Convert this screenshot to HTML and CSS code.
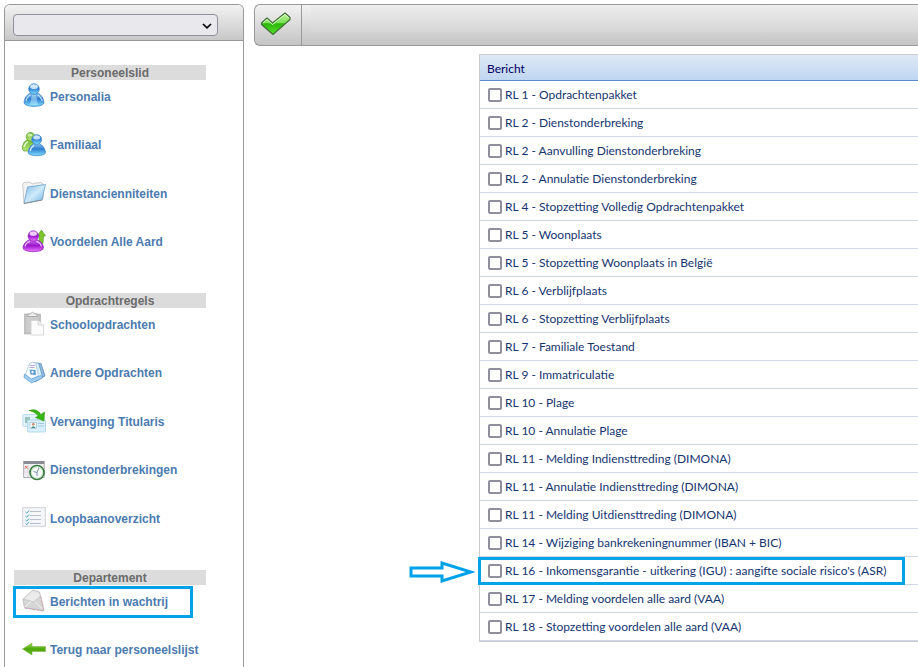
FILE: index.html
```html
<!DOCTYPE html>
<html lang="nl">
<head>
<meta charset="utf-8">
<title>Berichten in wachtrij</title>
<link rel="stylesheet" href="styles.css">
</head>
<body>
<svg class="defs" aria-hidden="true">
  <defs>
    <linearGradient id="blue" x1="0" y1="0" x2="0" y2="1"><stop offset="0" stop-color="#8cc4f2"/><stop offset=".45" stop-color="#2f7fd0"/><stop offset="1" stop-color="#7fe0ff"/></linearGradient>
    <linearGradient id="green" x1="0" y1="0" x2="0" y2="1"><stop offset="0" stop-color="#6fb733"/><stop offset="1" stop-color="#b6e67c"/></linearGradient>
    <linearGradient id="purple" x1="0" y1="0" x2="0" y2="1"><stop offset="0" stop-color="#cf7ce8"/><stop offset=".5" stop-color="#9a14cc"/><stop offset="1" stop-color="#ee78ff"/></linearGradient>
    <linearGradient id="folder" x1="0" y1="0" x2="1" y2="1"><stop offset="0" stop-color="#7fb9e6"/><stop offset=".5" stop-color="#cfeafa"/><stop offset="1" stop-color="#68aee2"/></linearGradient>
    <linearGradient id="arrow" x1="0" y1="0" x2="0" y2="1"><stop offset="0" stop-color="#9ee04e"/><stop offset=".5" stop-color="#4fa80c"/><stop offset="1" stop-color="#58b814"/></linearGradient>
    <linearGradient id="check" x1="0" y1="0" x2="0" y2="1"><stop offset="0" stop-color="#c5f5a2"/><stop offset=".45" stop-color="#7be054"/><stop offset=".5" stop-color="#2cb80a"/><stop offset="1" stop-color="#55e22c"/></linearGradient>
    <linearGradient id="grey" x1="0" y1="0" x2="1" y2="1"><stop offset="0" stop-color="#f4f4f4"/><stop offset="1" stop-color="#c4c4c4"/></linearGradient>
  </defs>
</svg>
<div class="app">
  <aside class="sidebar">
    <div class="sidebar-head">
      <select class="person-select" aria-label="Personeelslid kiezen"><option></option></select>
      <svg class="chevron" viewBox="0 0 10 6" aria-hidden="true"><path d="M1 1 L5 4.800 L9 1" fill="none" stroke="#000" stroke-width="1.700"/></svg>
    </div>
    <nav class="menu">
      <section>
        <h2>Personeelslid</h2>
        <ul>
          <li><a href="#"><svg viewBox="0 0 24 24"><path d="M2 17 Q3 10.500 8.500 8 H15.500 Q21 10.500 22 17 Q22.500 21 12 21.500 Q1.500 21 2 17Z" fill="url(#blue)" stroke="#3a80c4" stroke-width=".7"/><path d="M10 10h4l2 10H8z" fill="#c9f3ff" opacity=".45"/><circle cx="12" cy="4" r="5.300" fill="url(#blue)" stroke="#3a80c4" stroke-width=".7"/><ellipse cx="12" cy="1.800" rx="3.800" ry="2.300" fill="#e4f4ff" opacity=".85"/><path d="M3.800 16 Q5 11.500 8.500 10M20.200 16 Q19 11.500 15.500 10" fill="none" stroke="#d9f0ff" stroke-width="1.300" opacity=".8"/></svg>Personalia</a></li>
          <li><a href="#"><svg viewBox="0 0 24 24"><path d="M.3 14 Q1 8.500 5.500 6.500 H11 L12 18 H2 Q0 17 .3 14Z" fill="url(#green)" stroke="#5c9c2a" stroke-width=".7"/><circle cx="8.500" cy="3.800" r="4.300" fill="url(#green)" stroke="#5c9c2a" stroke-width=".7"/><ellipse cx="8" cy="2" rx="2.500" ry="1.500" fill="#edffd8" opacity=".7"/><path d="M2 14Q3 10 6 8.500" stroke="#edffd8" stroke-width="1.300" fill="none"/><path d="M6 19 Q7 13 11.800 10.500 H17.500 Q22.500 13 23.600 19 Q23.500 22.500 15 22.700 Q6 22.500 6 19Z" fill="url(#blue)" stroke="#3a80c4" stroke-width=".7"/><circle cx="14.700" cy="6.500" r="4.900" fill="url(#blue)" stroke="#3a80c4" stroke-width=".7"/><ellipse cx="14.700" cy="4.500" rx="3.400" ry="2" fill="#e4f4ff" opacity=".8"/><path d="M8 18Q9 14 12 12.500" stroke="#d9f0ff" stroke-width="1.300" fill="none"/></svg>Familiaal</a></li>
          <li><a href="#"><svg viewBox="0 0 24 24"><path d="M.7 2.500 L2 .5 L8 0 L10 2 L14 1 L19 .5 L21 2 V17 L2 21Z" fill="#f3f3f3" stroke="#bdbdbd" stroke-width=".8"/><path d="M5.500 5 L23.500 2.500 L20 18 L2 21.500Z" fill="url(#folder)" stroke="#5d9bcb" stroke-width=".7"/><path d="M2 21.500 L20 18" stroke="#888" stroke-width=".9"/></svg>Dienstancienniteiten</a></li>
          <li><a href="#"><svg viewBox="0 0 24 24"><path d="M19.500 0 L23.500 6 L21.500 6 L21 13.500 L17 12.500 L17.500 5.500 L15.500 5.500Z" fill="#7cc52f" stroke="#4a9a10" stroke-width=".6"/><path d="M1 17.500 Q2 11.500 8 9.500 H14.500 Q20.500 11.500 21.500 17.500 Q21.500 21.500 11.300 21.700 Q1 21.500 1 17.500Z" fill="url(#purple)" stroke="#8a1ab4" stroke-width=".7"/><circle cx="11.300" cy="6" r="5.200" fill="url(#purple)" stroke="#8a1ab4" stroke-width=".7"/><ellipse cx="11.300" cy="3.800" rx="3.600" ry="2.200" fill="#f9e4ff" opacity=".85"/><path d="M3 16.500Q4 12.500 8 11.500M14.500 11.500Q18.500 12.500 19.500 16.500" stroke="#f3c8ff" stroke-width="1.200" fill="none"/></svg>Voordelen Alle Aard</a></li>
        </ul>
      </section>
      <section>
        <h2>Opdrachtregels</h2>
        <ul>
          <li><a href="#"><svg viewBox="0 0 24 24"><rect x="2.500" y="1" width="16" height="20" fill="#c2c2c2" stroke="#aaa" stroke-width=".6"/><rect x="4.500" y="4" width="12" height="15" fill="#cdcdcd"/><path d="M6 1 H8.500 Q10.500 -2.500 12.500 1 H15 V3.500 H6Z" fill="#eee" stroke="#999" stroke-width=".7"/><path d="M9 7.500 H16 L21.500 12 V22 H9Z" fill="#fcfcfc" stroke="#d0d0d0" stroke-width=".8"/><path d="M16 7.500V12H21.500" fill="#eee" stroke="#d0d0d0" stroke-width=".8"/></svg>Schoolopdrachten</a></li>
          <li><a href="#"><svg viewBox="0 0 24 24"><path d="M12 3 L19 2.500 L23 15 L13 21Z" fill="#8fb9dc" stroke="#4c86b5" stroke-width=".7"/><path d="M10 2 L16.500 2 L20.500 16 L11 20.500Z" fill="#dceefa" stroke="#5f97c4" stroke-width=".7"/><path d="M7.500 2.500 Q10 .5 13.500 2 L16.500 14.500 L8 19 L3.500 13Z" fill="#f8fcff" stroke="#9bbfdd" stroke-width=".7"/><path d="M2.500 13 L9.500 18 L19 14.500 L20.500 17 L9.500 22 L2 16.500Z" fill="#9fcdf0" stroke="#5f9fd0" stroke-width=".7"/><path d="M7.500 8.500 L13.500 9 L14 14 L8.500 13.500Z" fill="#5c9bd0"/><circle cx="10.500" cy="11" r="1.200" fill="#fff"/><path d="M7.500 4.500h5.500M7.500 6.500h5" stroke="#b7a8d8"/></svg>Andere Opdrachten</a></li>
          <li><a href="#"><svg viewBox="0 0 24 24"><rect x=".8" y="4.500" width="15" height="12" rx="1" fill="#dff1fa" stroke="#b5d8e8" stroke-width=".8"/><rect x="3" y="7" width="5" height="6" fill="#9cc6bb"/><rect x="5.500" y="10" width="18" height="12" rx="1" fill="#d9f0fc" stroke="#a5d0e6" stroke-width=".8"/><rect x="8" y="12.500" width="6.500" height="6" fill="#fff" stroke="#9cc3d5" stroke-width=".7"/><circle cx="11.300" cy="14.300" r="1.400" fill="#bf9274"/><path d="M9 18Q11.300 14.500 13.700 18Z" fill="#3d8a80"/><path d="M16 13.500h6M16 16h6" stroke="#9ccae0"/><path d="M7 .5 Q15 -2 19 4.500 L22.500 2 L22 11 L13.500 7.500 L16.500 6 Q13 1.500 7 .5Z" fill="#35b812" stroke="#26930a" stroke-width=".6"/></svg>Vervanging Titularis</a></li>
          <li><a href="#"><svg viewBox="0 0 24 24"><rect x="1.700" y="3.500" width="20.500" height="16" fill="#f1f1f4" stroke="#a5a5af" stroke-width=".9"/><rect x="1.700" y="3" width="20.500" height="3" fill="#8b8b96"/><path d="M2 10h20M2 14h20M6 7v12M10 7v12M14 7v12M18 7v12" stroke="#d0d0d8" stroke-width=".8"/><path d="M3 8l2.500 2.500M5.500 8l-2.500 2.500" stroke="#e0695c"/><circle cx="15" cy="14.500" r="7" fill="#f7fbf7" stroke="#35783a" stroke-width="1.600"/><circle cx="15" cy="14.500" r="5.600" fill="none" stroke="#b5d6b6" stroke-width=".7"/><path d="M17 10 L15 14.500 L11.500 13.500 M15 14.500V18" stroke="#7182a5" fill="none" stroke-width=".9"/></svg>Dienstonderbrekingen</a></li>
          <li><a href="#"><svg viewBox="0 0 24 24"><rect x=".7" y=".7" width="22.600" height="18.600" fill="#f6f7fb" stroke="#cfd1d8" stroke-width="1"/><path d="M8 4.500h11M8 8.500h11M8 12.500h11M8 16.500h11" stroke="#b7c0ca" stroke-width="1"/><path d="M3.500 5l1.300 1.200L7 3.500M3.500 9l1.300 1.200L7 7.500M3.500 13l1.300 1.200L7 11.500M3.500 16.500l1.300 1.200L7 15" stroke="#4ba0c0" fill="none" stroke-width="1"/></svg>Loopbaanoverzicht</a></li>
        </ul>
      </section>
      <section>
        <h2>Departement</h2>
        <ul>
          <li><a class="marked" href="#"><svg viewBox="0 0 24 24"><path d="M1 9 L11 0 L17.500 2 L22 20.500 L2.500 17.500Z" fill="url(#grey)" stroke="#b5b5b5" stroke-width=".7"/><path d="M4 8 L11 2 L17 3.500 L18.500 8 L12 12Z" fill="#ececec"/><path d="M1 9 L11.500 12 L18.500 6 L22 20.500 L2.500 17.500Z" fill="#d6d6d6" stroke="#bbb" stroke-width=".6"/><path d="M2.500 17.500 L9 11.500 M22 20.500 L13 11.500" stroke="#f4f4f4" stroke-width="1"/><path d="M2.500 18 L21.500 21 L19 7" fill="none" stroke="#e09a9a" stroke-width="1" stroke-dasharray="2 2"/><path d="M2.500 18 L21.500 21" fill="none" stroke="#8ba3cf" stroke-width="1" stroke-dasharray="1 3" stroke-dashoffset="2"/></svg>Berichten in wachtrij</a></li>
          <li><a href="#"><svg viewBox="0 0 24 24"><path d="M.5 11 L10 5 V8.500 H23.500 V13.500 H10 V17Z" fill="url(#arrow)" stroke="#7db352" stroke-width=".6"/></svg>Terug naar personeelslijst</a></li>
        </ul>
      </section>
    </nav>
  </aside>
  <main class="content">
    <div class="toolbar">
      <button class="confirm" type="button" aria-label="Bevestigen"><svg viewBox="0 0 32 24"><path d="M1.500 11 L7 6 L12.500 11 L25 1 L30 5.500 V7.500 L13 22.500 L1.500 12.500Z" fill="url(#check)" stroke="#43713a" stroke-width="1.200" stroke-linejoin="round"/><path d="M3 11 L7 7.500 L12.500 12.500 L25 2.500 L28.500 5.500" fill="none" stroke="#d9ffc5" stroke-width="1"/></svg></button>
      <div class="toolbar-space"></div>
    </div>
    <table class="messages">
      <thead><tr><th scope="col">Bericht</th></tr></thead>
      <tbody>
        <tr><td><label><input type="checkbox">RL 1 - Opdrachtenpakket</label></td></tr>
        <tr><td><label><input type="checkbox">RL 2 - Dienstonderbreking</label></td></tr>
        <tr><td><label><input type="checkbox">RL 2 - Aanvulling Dienstonderbreking</label></td></tr>
        <tr><td><label><input type="checkbox">RL 2 - Annulatie Dienstonderbreking</label></td></tr>
        <tr><td><label><input type="checkbox">RL 4 - Stopzetting Volledig Opdrachtenpakket</label></td></tr>
        <tr><td><label><input type="checkbox">RL 5 - Woonplaats</label></td></tr>
        <tr><td><label><input type="checkbox">RL 5 - Stopzetting Woonplaats in België</label></td></tr>
        <tr><td><label><input type="checkbox">RL 6 - Verblijfplaats</label></td></tr>
        <tr><td><label><input type="checkbox">RL 6 - Stopzetting Verblijfplaats</label></td></tr>
        <tr><td><label><input type="checkbox">RL 7 - Familiale Toestand</label></td></tr>
        <tr><td><label><input type="checkbox">RL 9 - Immatriculatie</label></td></tr>
        <tr><td><label><input type="checkbox">RL 10 - Plage</label></td></tr>
        <tr><td><label><input type="checkbox">RL 10 - Annulatie Plage</label></td></tr>
        <tr><td><label><input type="checkbox">RL 11 - Melding Indiensttreding (DIMONA)</label></td></tr>
        <tr><td><label><input type="checkbox">RL 11 - Annulatie Indiensttreding (DIMONA)</label></td></tr>
        <tr><td><label><input type="checkbox">RL 11 - Melding Uitdiensttreding (DIMONA)</label></td></tr>
        <tr><td><label><input type="checkbox">RL 14 - Wijziging bankrekeningnummer (IBAN + BIC)</label></td></tr>
        <tr><td class="pointed"><svg class="pointer" viewBox="0 0 66 22" aria-hidden="true"><path d="M2 7 H33 V2 L62 11 L33 20 V15 H2Z" fill="none" stroke="#00a2e8" stroke-width="3"/></svg><label><input type="checkbox">RL 16 - Inkomensgarantie - uitkering (IGU) : aangifte sociale risico's (ASR)</label></td></tr>
        <tr><td><label><input type="checkbox">RL 17 - Melding voordelen alle aard (VAA)</label></td></tr>
        <tr><td><label><input type="checkbox">RL 18 - Stopzetting voordelen alle aard (VAA)</label></td></tr>
      </tbody>
    </table>
  </main>
</div>
</body>
</html>
```
FILE: styles.css
```css
*,
*::after { box-sizing: border-box; }

body {
  margin: 0;
  background: #fff;
  font: 12px "Liberation Sans", Arial, sans-serif;
}

.defs { position: absolute; width: 0; height: 0; }

.app {
  display: flex;
  gap: 10px;
  min-height: 100vh;
  padding: 4px 0 0 4px;
  overflow: hidden;
}

.sidebar {
  flex: 0 0 240px;
  border: 1px solid #999;
  border-bottom: 0;
  border-radius: 6px 6px 0 0;
}

.sidebar-head {
  position: relative;
  height: 36px;
  padding: 9px 8px;
  border-bottom: 1px solid #999;
  border-radius: 5px 5px 0 0;
  background: linear-gradient(#f2f2f2, #c8c8c8);
}

.person-select {
  display: block;
  appearance: none;
  width: 205px;
  height: 22px;
  border: 1px solid #8f8f9d;
  border-radius: 4px;
  background: #e9e9ed;
}

.chevron {
  position: absolute;
  left: 197px;
  top: 18px;
  width: 10px;
  height: 6px;
}

.menu {
  display: flex;
  flex-direction: column;
  gap: 39px;
  padding: 24px 9px 0;
}

.menu h2 {
  width: 192px;
  height: 15px;
  margin: 0 0 5px;
  background: #dcdcdc;
  color: #6b6b6b;
  font-size: 12px;
  line-height: 16px;
  text-align: center;
}

.menu ul {
  margin: 0;
  padding: 0 0 0 8px;
  list-style: none;
}

.menu li { margin-bottom: 24px; }
.menu li:nth-child(even) { margin-bottom: 25px; }
.menu li:last-child { margin-bottom: 0; }

.menu a {
  position: relative;
  display: flex;
  align-items: center;
  gap: 4px;
  height: 24px;
  color: #4b7bb0;
  font-weight: bold;
  text-decoration: none;
}

.menu svg { width: 24px; height: 24px; overflow: visible; }

.marked::after {
  content: "";
  position: absolute;
  inset: -4px auto -4px -9px;
  width: 180px;
  border: 3px solid #00a2e8;
}

.content { flex: 1; min-width: 0; }

.toolbar {
  display: flex;
  height: 42px;
  border: 1px solid #999;
  border-right: 0;
  border-radius: 6px 0 0 6px;
  background: linear-gradient(#f2f2f2, #c4c4c4);
}

.confirm {
  width: 47px;
  padding: 0 0 2px 5px;
  border: 0;
  border-right: 1px solid #999;
  background: none;
  text-align: left;
}

.confirm svg { display: block; width: 32px; height: 24px; }

.toolbar-space {
  flex: 1;
  height: 27px;
  margin-left: 9px;
  background: linear-gradient(#ededed, #d6d6d6);
}

.messages {
  width: calc(100% - 225px);
  margin: 8px 0 0 225px;
  border: 1px solid #ccc;
  border-width: 1px 0 1px 1px;
  border-collapse: separate;
  border-spacing: 0;
  color: #15346f;
  font: 12px Lato, "Segoe UI", sans-serif;
}

.messages th {
  height: 26px;
  padding: 3px 7px 0;
  border-bottom: 1px solid #5b8cc8;
  background: linear-gradient(#dfe9f5, #bfd6f2);
  color: #000066;
  font-weight: normal;
  line-height: 18px;
  text-align: left;
}

.messages td {
  height: 28px;
  padding: 0 8px;
  border-bottom: 1px solid #d0d7e5;
  white-space: nowrap;
}

.messages label {
  display: flex;
  align-items: center;
  gap: 3px;
}

.messages input {
  appearance: none;
  width: 14px;
  height: 14px;
  margin: 0;
  border: 2px solid #8f8f9d;
  border-radius: 2px;
  background: #fff;
}

.pointed { position: relative; }

.pointed::after {
  content: "";
  position: absolute;
  inset: 0 auto -1px -2px;
  width: 427px;
  border: 3px solid #00a2e8;
  pointer-events: none;
}

.pointer {
  position: absolute;
  left: -71px;
  top: 4px;
  width: 66px;
  height: 22px;
}
```
